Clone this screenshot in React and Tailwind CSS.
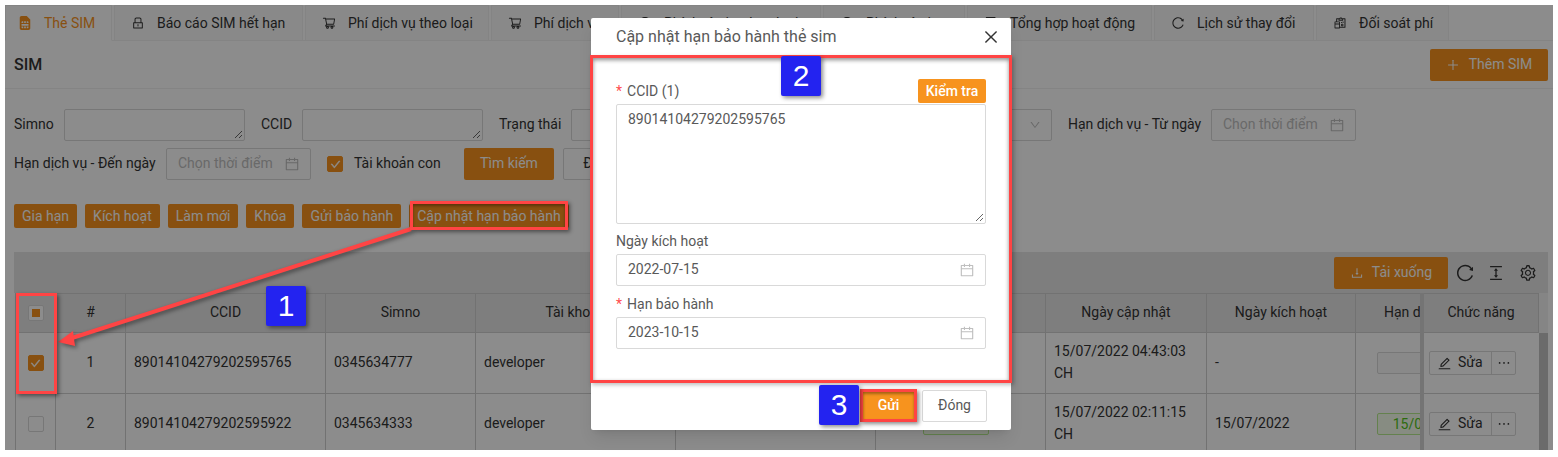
import React from 'react';
import {
  AiOutlineLock, AiOutlineShoppingCart, AiOutlineReload, AiOutlineReconciliation, AiOutlineCalendar,
  AiOutlineDownload, AiOutlineColumnHeight, AiOutlineSetting, AiOutlineEdit, AiOutlineEllipsis,
  AiOutlinePlus, AiOutlineDown, AiOutlineClose, AiOutlineCheck, AiOutlineFileDone, AiOutlineDollar,
} from 'react-icons/ai';
import { FaSimCard } from 'react-icons/fa';

const tabs = [
  { label: 'Thẻ SIM', icon: FaSimCard, w: 'w-[107px]', active: true },
  { label: 'Báo cáo SIM hết hạn', icon: AiOutlineLock, w: 'w-[189px]' },
  { label: 'Phí dịch vụ theo loại', icon: AiOutlineShoppingCart, w: 'w-[184px]' },
  { label: 'Phí dịch vụ', icon: AiOutlineShoppingCart, w: 'w-[128px]' },
  { label: 'Phí thuê sim theo loại', icon: AiOutlineDollar, w: 'w-[200px]' },
  { label: 'Phí thuê sim', icon: AiOutlineDollar, w: 'w-[142px]' },
  { label: 'Tổng hợp hoạt động', icon: AiOutlineFileDone, w: 'w-[185px]' },
  { label: 'Lịch sử thay đổi', icon: AiOutlineReload, w: 'w-[160px]' },
  { label: 'Đối soát phí', icon: AiOutlineReconciliation, w: 'w-[133px]' },
];

const actions = ['Gia hạn', 'Kích hoạt', 'Làm mới', 'Khóa', 'Gửi bảo hành', 'Cập nhật hạn bảo hành'];

function Resizer() {
  return (
    <svg width="9" height="9" viewBox="0 0 9 9" className="absolute right-[1px] bottom-[1px] text-[#666]">
      <path d="M1 8 8 1M5 8 8 5" stroke="currentColor" strokeWidth="1" />
    </svg>
  );
}

function FilterArea({ width }) {
  return (
    <div className={`relative h-[32px] ${width} shrink-0 rounded-[2px] border border-[#d9d9d9] bg-white`}>
      <Resizer />
    </div>
  );
}

function DateFilter({ width }) {
  return (
    <div className={`flex h-[32px] ${width} shrink-0 items-center justify-between rounded-[2px] border border-[#d9d9d9] bg-white pr-[10px] pl-[11px] text-[#bfbfbf]`}>
      <span className="mb-[2px]">Chọn thời điểm</span>
      <AiOutlineCalendar size={16} />
    </div>
  );
}

function Check({ checked }) {
  return (
    <span className={`flex h-[16px] w-[16px] items-center justify-center rounded-[2px] border ${checked ? 'border-[#f7931e] bg-[#f7931e]' : 'border-[#d9d9d9] bg-white'} text-white`}>
      {checked && <AiOutlineCheck size={11} strokeWidth={60} />}
    </span>
  );
}

function Td({ className = '', children }) {
  return <td className={`border-r border-b border-[#cfcfcf] px-[8px] pb-[2px] align-middle ${className}`}>{children}</td>;
}

function Th({ className = '', children }) {
  return <th className={`border-t border-r border-b border-[#cfcfcf] bg-[#e6e6e6] pb-[2px] text-center font-normal ${className}`}>{children}</th>;
}

function Row({ n, ccid, simno, checked, updated, activated, tagged }) {
  return (
    <tr className="h-[61px]">
      <Td className="border-l !pb-0"><div className="flex justify-center"><Check checked={checked} /></div></Td>
      <Td className="text-center">{n}</Td>
      <Td>{ccid}</Td>
      <Td>{simno}</Td>
      <Td>developer</Td>
      <Td></Td>
      <Td className="!pb-0">
        {tagged && <div className="ml-[39px] h-[22px] w-[66px] rounded-[2px] border border-[#b7eb8f] bg-[#f6ffed]" />}
      </Td>
      <Td className="leading-[22px]">{updated}<br />CH</Td>
      <Td>{activated}</Td>
      <Td className="!px-0 !pb-0">
        <div className={`ml-[21px] h-[22px] w-[106px] rounded-[2px] border text-center leading-[20px] ${tagged ? 'border-[#b7eb8f] bg-[#f6ffed] text-[#52c41a]' : 'border-[#d9d9d9] bg-[#fafafa]'}`}>
          {tagged && '15/07/2023'}
        </div>
      </Td>
    </tr>
  );
}

function ActionRow() {
  return (
    <div className="flex h-[61px] items-center border-b border-[#cfcfcf] pl-[5px]">
      <div className="flex h-[24px] items-center rounded-[2px] border border-[#d9d9d9]">
        <span className="flex h-full w-[62px] items-center gap-[6px] border-r border-[#d9d9d9] pl-[7px]">
          <AiOutlineEdit size={15} /><span className="mb-[2px]">Sửa</span>
        </span>
        <span className="flex w-[23px] items-center justify-center"><AiOutlineEllipsis size={16} /></span>
      </div>
    </div>
  );
}

function Page() {
  return (
    <div className="flex h-full flex-col bg-white">
      <div className="flex h-[36px] shrink-0 gap-[2px] border-b border-[#f0f0f0]">
        {tabs.map((t) => (
          <div key={t.label} className={`flex ${t.w} h-[36px] shrink-0 items-center border border-[#f0f0f0] ${t.active ? 'gap-[12px] border-b-white bg-white pl-[12px] text-[#f7931e]' : 'gap-[12px] bg-[#fafafa] pl-[16px]'}`}>
            <t.icon size={14} className="shrink-0" />
            <span className="whitespace-nowrap">{t.label}</span>
          </div>
        ))}
      </div>
      <div className="flex h-[48px] shrink-0 items-center justify-between border-b border-[#f0f0f0] pr-[5px] pl-[9px]">
        <span className="text-[16px] font-medium">SIM</span>
        <span className="flex h-[32px] w-[118px] items-center justify-center gap-[9px] rounded-[2px] bg-[#f7931e] text-white">
          <AiOutlinePlus size={14} /><span className="mb-[2px]">Thêm SIM</span>
        </span>
      </div>
      <div className="mt-[20px] flex h-[32px] shrink-0 items-center pl-[9px]">
        <span className="mb-[2px] w-[50px]">Simno</span>
        <FilterArea width="w-[181px]" />
        <span className="mb-[2px] ml-[16px] w-[41px]">CCID</span>
        <FilterArea width="w-[181px]" />
        <span className="mb-[2px] ml-[16px] w-[72px]">Trạng thái</span>
        <div className="flex h-[32px] w-[481px] shrink-0 items-center justify-end rounded-[2px] border border-[#d9d9d9] bg-white pr-[10px] text-[#bfbfbf]">
          <AiOutlineDown size={12} />
        </div>
        <span className="mb-[2px] ml-[16px] w-[143px]">Hạn dịch vụ - Từ ngày</span>
        <DateFilter width="w-[145px]" />
      </div>
      <div className="mt-[7px] flex h-[32px] shrink-0 items-center pl-[9px]">
        <span className="mb-[2px] w-[152px]">Hạn dịch vụ - Đến ngày</span>
        <DateFilter width="w-[145px]" />
        <span className="ml-[16px]"><Check checked /></span>
        <span className="mb-[2px] ml-[11px] w-[110px]">Tài khoản con</span>
        <span className="flex h-[32px] w-[90px] items-center justify-center rounded-[2px] bg-[#f7931e] pb-[2px] text-white">Tìm kiếm</span>
        <span className="ml-[9px] flex h-[32px] w-[80px] items-center justify-center rounded-[2px] border border-[#d9d9d9] bg-white pb-[2px]">Đặt lại</span>
      </div>
      <div className="mt-[24px] flex h-[24px] shrink-0 gap-[8px] pl-[9px]">
        {actions.map((a) => (
          <span key={a} className="flex h-[24px] items-center rounded-[2px] bg-[#f7931e] px-[8px] text-white">{a}</span>
        ))}
      </div>
      <div className="mt-[24px] ml-[9px] flex h-[41px] w-[1534px] shrink-0 items-center justify-end bg-[#e6e6e6] pr-[11px]">
        <span className="flex h-[32px] w-[114px] items-center justify-center gap-[8px] rounded-[2px] bg-[#f7931e] text-white">
          <AiOutlineDownload size={14} /><span className="mb-[2px]">Tải xuống</span>
        </span>
        <AiOutlineReload size={20} className="ml-[7px]" />
        <AiOutlineColumnHeight size={18} className="ml-[12px]" />
        <AiOutlineSetting size={18} className="ml-[14px]" />
      </div>
      <div className="ml-[10px] flex w-[1533px] flex-1 overflow-hidden">
        <div className="w-[1405px] shrink-0 overflow-hidden">
          <table className="w-[1619px] table-fixed border-separate border-spacing-0">
            <colgroup>
              <col className="w-[41px]" />
              <col className="w-[70px]" />
              <col className="w-[200px]" />
              <col className="w-[150px]" />
              <col className="w-[200px]" />
              <col className="w-[200px]" />
              <col className="w-[170px]" />
              <col className="w-[161px]" />
              <col className="w-[149px]" />
              <col className="w-[278px]" />
            </colgroup>
            <thead>
              <tr className="h-[40px]">
                <Th className="border-l !pb-0"><div className="flex justify-center"><span className="flex h-[16px] w-[16px] items-center justify-center rounded-[2px] border border-[#d9d9d9] bg-white"><span className="h-[8px] w-[8px] bg-[#f7931e]" /></span></div></Th>
                <Th>#</Th>
                <Th>CCID</Th>
                <Th>Simno</Th>
                <Th>Tài khoản</Th>
                <Th></Th>
                <Th></Th>
                <Th>Ngày cập nhật</Th>
                <Th>Ngày kích hoạt</Th>
                <Th className="!text-left"><span className="pl-[28px]">Hạn dịch vụ</span></Th>
              </tr>
            </thead>
            <tbody>
              <Row n={1} ccid="89014104279202595765" simno="0345634777" checked updated="15/07/2022 04:43:03" activated="-" />
              <Row n={2} ccid="89014104279202595922" simno="0345634333" updated="15/07/2022 02:11:15" activated="15/07/2022" tagged />
            </tbody>
          </table>
        </div>
        <div className="w-[119px] shrink-0 border-l-[4px] border-[#d4d4d4]">
          <div className="flex h-[40px] items-center justify-center border-y border-r border-[#cfcfcf] bg-[#e6e6e6] pb-[2px]">Chức năng</div>
          <ActionRow />
          <ActionRow />
        </div>
        <div className="w-[9px] shrink-0">
          <div className="h-[40px] bg-[#f2f2f2]" />
          <div className="h-full bg-[#c4c4c4]" />
        </div>
      </div>
    </div>
  );
}

function ModalDate({ value }) {
  return (
    <div className="flex h-[32px] items-center justify-between rounded-[2px] border border-[#d9d9d9] pr-[10px] pl-[11px]">
      <span className="mb-[2px]">{value}</span>
      <AiOutlineCalendar size={16} className="text-[#bfbfbf]" />
    </div>
  );
}

function Modal() {
  return (
    <div className="absolute top-[18px] left-[591px] flex h-[412px] w-[420px] flex-col rounded-[2px] bg-white text-[#595959] shadow-lg">
      <div className="flex h-[37px] shrink-0 items-center justify-between pr-[11px] pl-[25px] text-[16px]">
        <span>Cập nhật hạn bảo hành thẻ sim</span>
        <AiOutlineClose size={18} className="text-[#333]" />
      </div>
      <div className="flex-1 px-[25px] pt-[23px]">
        <div className="flex h-[26px] items-center justify-between">
          <span><span className="mr-[5px] text-[#ff4d4f]">*</span>CCID (1)</span>
          <span className="flex h-[24px] w-[68px] items-center justify-center rounded-[2px] bg-[#f7931e] font-medium text-white">Kiểm tra</span>
        </div>
        <div className="relative h-[120px] rounded-[2px] border border-[#d9d9d9] px-[11px] py-[3px]">
          89014104279202595765
          <Resizer />
        </div>
        <div className="mt-[6px] h-[24px] leading-[22px]">Ngày kích hoạt</div>
        <ModalDate value="2022-07-15" />
        <div className="mt-[7px] h-[24px] leading-[22px]"><span className="mr-[5px] text-[#ff4d4f]">*</span>Hạn bảo hành</div>
        <ModalDate value="2023-10-15" />
      </div>
      <div className="flex h-[48px] shrink-0 items-center justify-end gap-[5px] pr-[24px]">
        <span className="flex h-[32px] w-[57px] items-center justify-center bg-[#f7931e] pb-[2px] font-medium text-white">Gửi</span>
        <span className="flex h-[32px] w-[65px] items-center justify-center rounded-[2px] border border-[#d9d9d9] pb-[2px]">Đóng</span>
      </div>
    </div>
  );
}

function Badge({ className, children }) {
  return (
    <div className={`absolute flex h-[40px] w-[40px] items-center justify-center rounded-[2px] bg-[#2323f0] font-['Liberation_Sans',sans-serif] text-[30px] text-white shadow-[2px_2px_4px_rgba(0,0,0,0.45)] ${className}`}>
      {children}
    </div>
  );
}

export default function App() {
  return (
    <div className="relative h-[457px] w-[1558px] overflow-hidden bg-white font-['Roboto',sans-serif] text-[14px] leading-[22px] text-[#333]">
      <div className="absolute top-[5px] right-[5px] bottom-[7px] left-[5px] overflow-hidden">
        <Page />
        <div className="absolute inset-0 bg-black/45" />
      </div>
      <Modal />
      {/* annotations */}
      <svg width="1558" height="457" className="absolute top-0 left-0 drop-shadow-[2px_2px_2px_rgba(0,0,0,0.45)]">
        <path d="M411 229 72 338" stroke="#ff4444" strokeWidth="4" fill="none" />
        <path d="M58 342 73 331 75 346Z" fill="#ff4444" />
      </svg>
      <div className="absolute top-[293px] left-[16px] h-[101px] w-[41px] border-[3px] border-[#ff4444] shadow-[2px_2px_4px_rgba(0,0,0,0.45)]" />
      <div className="absolute top-[201px] left-[410px] h-[29px] w-[158px] border-[3px] border-[#ff4444] shadow-[inset_0_2px_3px_rgba(0,0,0,0.35),2px_2px_4px_rgba(0,0,0,0.45)]" />
      <div className="absolute top-[55px] left-[590px] h-[328px] w-[422px] border-[3px] border-[#ff4444] shadow-[inset_0_2px_4px_rgba(0,0,0,0.45),2px_2px_4px_rgba(0,0,0,0.25)]" />
      <div className="absolute top-[389px] left-[860px] h-[33px] w-[57px] border-[3px] border-[#ff4444] shadow-[inset_0_2px_3px_rgba(0,0,0,0.35),2px_2px_4px_rgba(0,0,0,0.45)]" />
      <Badge className="top-[286px] left-[266px]">1</Badge>
      <Badge className="top-[56px] left-[781px]">2</Badge>
      <Badge className="top-[385px] left-[819px]">3</Badge>
    </div>
  );
}
